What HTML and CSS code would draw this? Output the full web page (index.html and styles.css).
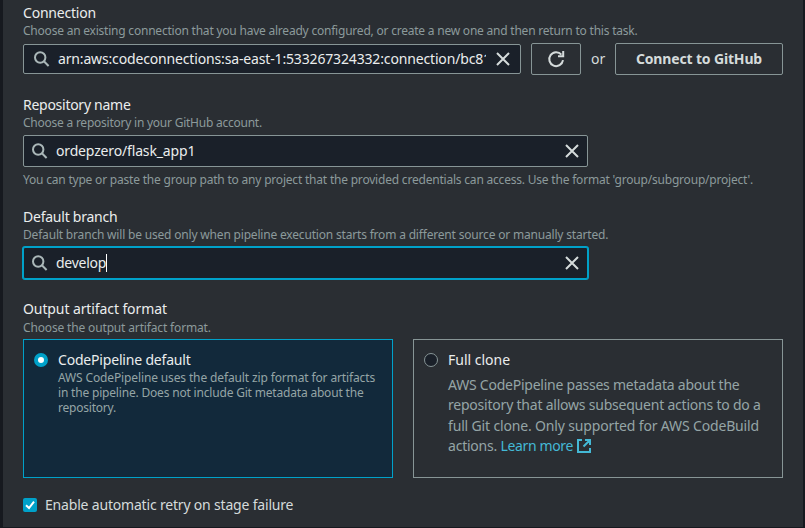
FILE: index.html
```html
<!DOCTYPE html>
<html lang="en">
<head>
<meta charset="utf-8">
<title>Source</title>
<link rel="stylesheet" href="styles.css">
</head>
<body>
<main class="panel">
  <section class="field field-connection">
    <h2 class="label tight-3">Connection</h2>
    <p class="hint tight-3">Choose an existing connection that you have already configured, or create a new one and then return to this task.</p>
    <div class="row">
      <div class="input input-connection">
        <svg class="search" viewBox="0 0 16 16"><circle cx="6.2" cy="6.5" r="5.2"/><path d="M9.9 10.2 14.6 15"/></svg>
        <span class="value"><span class="tight-1">arn:aws:codeconnections:sa-east-1:533267324332:connection/bc81</span></span>
        <svg class="close" viewBox="0 0 14 14"><path d="M1 1 13 13M13 1 1 13"/></svg>
      </div>
      <button class="button refresh" aria-label="Refresh"><svg viewBox="0 0 18 18"><path d="M16 10.2A6.9 6.9 0 1 1 14.4 4.7"/><path class="head" d="M17.2 1v6.2H11V5.2h4.2V1z"/></svg></button>
      <span class="or">or</span>
      <button class="button connect tight-1">Connect to GitHub</button>
    </div>
  </section>
  <section class="field field-repository">
    <h2 class="label tight-4">Repository name</h2>
    <p class="hint tight-3b">Choose a repository in your GitHub account.</p>
    <div class="input">
      <svg class="search" viewBox="0 0 16 16"><circle cx="6.2" cy="6.5" r="5.2"/><path d="M9.9 10.2 14.6 15"/></svg>
      <span class="value"><span class="tight-1">ordepzero/flask_app1</span></span>
      <svg class="close" viewBox="0 0 14 14"><path d="M1 1 13 13M13 1 1 13"/></svg>
    </div>
    <p class="hint note tight-2b">You can type or paste the group path to any project that the provided credentials can access. Use the format 'group/subgroup/project'.</p>
  </section>
  <section class="field field-branch">
    <h2 class="label tight-3b">Default branch</h2>
    <p class="hint tight-2">Default branch will be used only when pipeline execution starts from a different source or manually started.</p>
    <div class="input focused">
      <svg class="search" viewBox="0 0 16 16"><circle cx="6.2" cy="6.5" r="5.2"/><path d="M9.9 10.2 14.6 15"/></svg>
      <span class="value"><span class="tight-4">develop</span><i class="caret"></i></span>
      <svg class="close" viewBox="0 0 14 14"><path d="M1 1 13 13M13 1 1 13"/></svg>
    </div>
  </section>
  <section class="field field-format">
    <h2 class="label tight-0">Output artifact format</h2>
    <p class="hint tight-1">Choose the output artifact format.</p>
    <div class="tiles">
      <div class="tile selected">
        <i class="radio"></i>
        <div class="tile-body">
          <h3 class="label tight-2">CodePipeline default</h3>
          <p class="small"><span class="tight-0b">AWS CodePipeline uses the default zip format for artifacts</span><br><span class="tight-2">in the pipeline. Does not include Git metadata about the</span><br><span class="tight-3">repository.</span></p>
        </div>
      </div>
      <div class="tile">
        <i class="radio"></i>
        <div class="tile-body">
          <h3 class="label">Full clone</h3>
          <p class="large"><span class="tight-3b">AWS CodePipeline passes metadata about the</span><br><span class="tight-3">repository that allows subsequent actions to do a</span><br><span class="tight-1">full Git clone. Only supported for AWS CodeBuild</span><br><span class="tight-3">actions. </span><a><span class="tight-5">Learn more</span><svg class="external" viewBox="0 0 14 14"><path d="M5 1H1v12h12V9M8 1h5v5M13 1 6.5 7.5"/></svg></a></p>
        </div>
      </div>
    </div>
  </section>
  <div class="check-row">
    <i class="checkbox"><svg viewBox="0 0 14 14"><path d="M3 7.3 6 10 11 3.7"/></svg></i>
    <span class="check-label tight-2">Enable automatic retry on stage failure</span>
  </div>
</main>
</body>
</html>
```
FILE: styles.css
```css
* { box-sizing: border-box; }
body {
  margin: 0;
  height: 528px;
  overflow: hidden;
  background: #16191f;
  font-family: "Noto Sans", "Open Sans", sans-serif;
  font-size: 14px;
  color: #d5dbdb;
}
h2, h3, p { margin: 0; font-weight: 400; }
svg { fill: none; stroke: currentColor; flex: none; display: block; }
.panel {
  margin: 0 2px 0 3px;
  height: 527px;
  padding: 3px 20px 0;
  background: #2a2e33;
}
.label { font-size: 14px; line-height: 20px; color: #eaeded; white-space: nowrap; }
.hint { font-size: 12px; line-height: 15px; color: #8c9a9b; white-space: nowrap; }
.row { display: flex; align-items: center; margin-top: 5px; }
.input {
  display: flex;
  align-items: center;
  width: 565px;
  height: 32px;
  padding: 0 8px;
  margin-top: 5px;
  border: 1px solid #879596;
  border-radius: 2px;
  background: #1a2029;
}
.input-connection { width: 498px; height: 30px; margin: 0 10px 0 0; padding: 0 10px; }
.focused { border-color: #00a1c9; box-shadow: 0 0 0 1px #00a1c9; }
.search { width: 16px; height: 16px; stroke-width: 2; color: #aab7b8; }
.value { flex: 1; display: flex; align-items: center; margin: 0 10px 0 8px; padding-bottom: 1px; overflow: hidden; white-space: nowrap; color: #eaeded; }
.close { width: 14px; height: 14px; stroke-width: 2; color: #d5dbdb; }
.caret { width: 1px; height: 18px; background: #fff; }
.button {
  display: flex;
  align-items: center;
  justify-content: center;
  height: 32px;
  padding: 0;
  border: 1px solid #879596;
  border-radius: 2px;
  background: transparent;
  color: #d5dbdb;
  font: 700 14px "Noto Sans", sans-serif;
}
.refresh { width: 50px; }
.refresh svg { width: 18px; height: 18px; stroke-width: 2; }
.refresh .head { fill: currentColor; stroke: none; }
.or { margin: 0 11px 0 10px; padding-bottom: 1px; width: 13px; }
.connect { width: 168px; padding-bottom: 2px; }
.field-repository { margin-top: 20px; }
.note { margin: 5px 0 1px; }
.field-branch { margin-top: 20px; }
.field-format { margin-top: 20px; }
.field-format .hint { padding-top: 1px; }
.tiles { display: flex; gap: 20px; margin-top: 4px; }
.tile { display: flex; width: 370px; height: 139px; padding: 10px; border: 1px solid #879596; }
.selected { border-color: #00a1c9; background: #12293b; }
.radio { flex: none; width: 14px; height: 14px; margin: 3px 10px 0 0; border: 1px solid #879596; border-radius: 50%; background: #1a2029; }
.selected .radio { border: 4px solid #00a1c9; background: #fff; }
.small { font-size: 12px; line-height: 15px; color: #95a5a6; white-space: nowrap; }
.large { margin-top: 5px; line-height: 20.4px; color: #95a5a6; white-space: nowrap; }
.large a { color: #44b9d6; }
.external { display: inline-block; width: 14px; height: 14px; margin-left: 4px; stroke-width: 2; vertical-align: -2px; }
.check-row { display: flex; align-items: center; gap: 8px; margin-top: 17px; height: 20px; white-space: nowrap; }
.check-label { padding-bottom: 1px; }
.checkbox { width: 14px; height: 14px; border-radius: 2px; background: #00a1c9; color: #fff; }
.checkbox svg { width: 14px; height: 14px; stroke-width: 2; }

/* Tracking steps */
.tight-0 { letter-spacing: -0.1px; }
.tight-0b { letter-spacing: -0.133px; }
.tight-1 { letter-spacing: -0.155px; }
.tight-2 { letter-spacing: -0.185px; }
.tight-2b { letter-spacing: -0.204px; }
.tight-3 { letter-spacing: -0.218px; }
.tight-3b { letter-spacing: -0.237px; }
.tight-4 { letter-spacing: -0.27px; }
.tight-5 { letter-spacing: -0.36px; }
```
